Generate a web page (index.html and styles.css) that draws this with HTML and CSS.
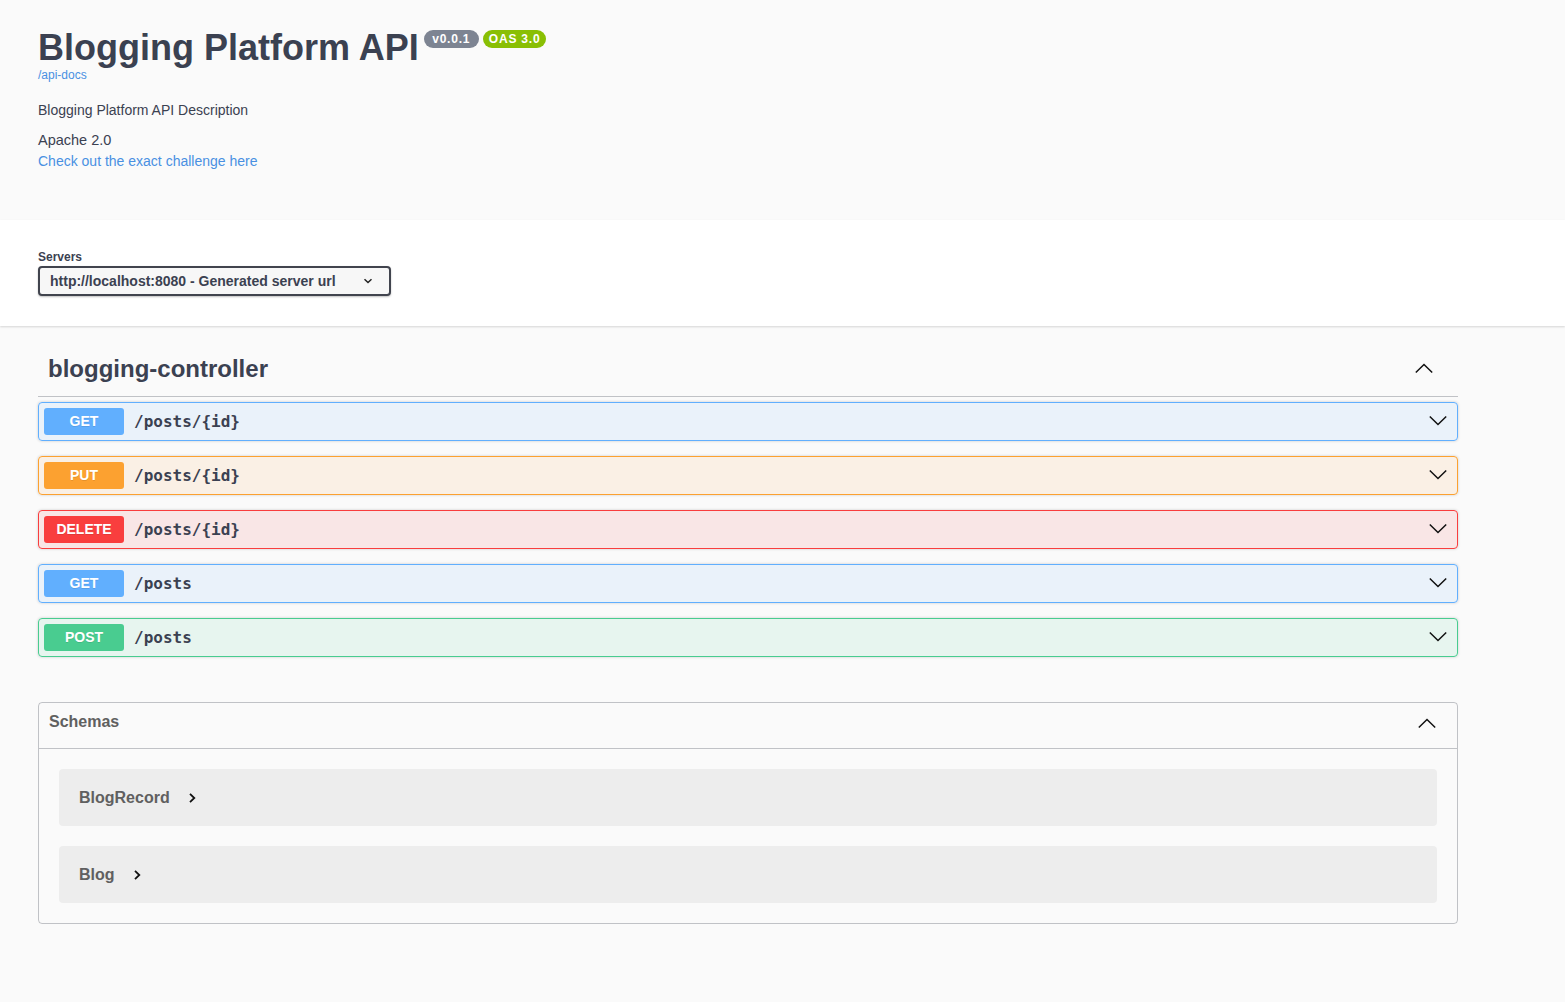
FILE: index.html
```html
<!DOCTYPE html>
<html lang="en">
<head>
<meta charset="utf-8">
<title>Blogging Platform API</title>
<link rel="stylesheet" href="styles.css">
</head>
<body>
<div class="info-section">
  <div class="wrapper">
    <h1 class="title"><span>Blogging Platform API</span><span class="badge version">v0.0.1</span><span class="badge oas">OAS 3.0</span></h1>
    <a class="base-url" href="#">/api-docs</a>
    <p class="description">Blogging Platform API Description</p>
    <div class="license">Apache 2.0</div>
    <a class="ext-link" href="#">Check out the exact challenge here</a>
  </div>
</div>

<div class="scheme-container">
  <div class="wrapper">
    <span class="servers-label">Servers</span>
    <div class="select">
      <span>http://localhost:8080 - Generated server url</span>
      <svg class="select-arrow" width="10" height="6" viewBox="0 0 10 6"><polyline points="1.5,1.2 5,4.5 8.5,1.2" fill="none" stroke="#222" stroke-width="1.5"/></svg>
    </div>
  </div>
</div>

<div class="wrapper">
  <section class="tag-section">
    <h3 class="tag">
      <span>blogging-controller</span>
      <svg class="tag-arrow" width="20" height="20" viewBox="0 0 20 20"><polyline points="1.8,13.5 10,5.5 18.2,13.5" fill="none" stroke="#111" stroke-width="1.5"/></svg>
    </h3>

    <div class="opblock get">
      <span class="method">GET</span>
      <span class="path">/posts/{id}</span>
      <svg class="op-arrow" width="20" height="20" viewBox="0 0 20 20"><polyline points="1.8,4.5 10,12.5 18.2,4.5" fill="none" stroke="#111" stroke-width="1.5"/></svg>
    </div>
    <div class="opblock put">
      <span class="method">PUT</span>
      <span class="path">/posts/{id}</span>
      <svg class="op-arrow" width="20" height="20" viewBox="0 0 20 20"><polyline points="1.8,4.5 10,12.5 18.2,4.5" fill="none" stroke="#111" stroke-width="1.5"/></svg>
    </div>
    <div class="opblock delete">
      <span class="method">DELETE</span>
      <span class="path">/posts/{id}</span>
      <svg class="op-arrow" width="20" height="20" viewBox="0 0 20 20"><polyline points="1.8,4.5 10,12.5 18.2,4.5" fill="none" stroke="#111" stroke-width="1.5"/></svg>
    </div>
    <div class="opblock get">
      <span class="method">GET</span>
      <span class="path">/posts</span>
      <svg class="op-arrow" width="20" height="20" viewBox="0 0 20 20"><polyline points="1.8,4.5 10,12.5 18.2,4.5" fill="none" stroke="#111" stroke-width="1.5"/></svg>
    </div>
    <div class="opblock post">
      <span class="method">POST</span>
      <span class="path">/posts</span>
      <svg class="op-arrow" width="20" height="20" viewBox="0 0 20 20"><polyline points="1.8,4.5 10,12.5 18.2,4.5" fill="none" stroke="#111" stroke-width="1.5"/></svg>
    </div>
  </section>

  <section class="models">
    <h4 class="models-head">
      <span>Schemas</span>
      <svg class="models-arrow" width="20" height="20" viewBox="0 0 20 20"><polyline points="1.8,15.5 10,7.5 18.2,15.5" fill="none" stroke="#111" stroke-width="1.5"/></svg>
    </h4>
    <div class="model">
      <span>BlogRecord</span>
      <svg class="model-arrow" width="10" height="12" viewBox="0 0 10 12"><polyline points="2,1.8 6.3,6 2,10.2" fill="none" stroke="#111" stroke-width="1.8"/></svg>
    </div>
    <div class="model">
      <span>Blog</span>
      <svg class="model-arrow" width="10" height="12" viewBox="0 0 10 12"><polyline points="2,1.8 6.3,6 2,10.2" fill="none" stroke="#111" stroke-width="1.8"/></svg>
    </div>
  </section>
</div>
</body>
</html>
```

FILE: styles.css
```css
html, body {
  margin: 0;
  background: #fafafa;
}

body {
  font-family: "Liberation Sans", Arial, sans-serif;
  color: #3b4151;
}

.wrapper {
  max-width: 1420px;
  padding: 0 38px;
}

/* Info header */
.info-section {
  height: 220px;
  box-sizing: border-box;
  padding-top: 26px;
}

.title {
  margin: 0;
  display: flex;
  align-items: flex-start;
  font-size: 36px;
  font-weight: 700;
  line-height: 43px;
  color: #3b4151;
}

.badge {
  margin: 4px 0 0 5px;
  height: 18px;
  line-height: 18px;
  font-size: 12px;
  padding: 0 8.5px;
  border-radius: 57px;
  color: #fff;
  letter-spacing: 0.8px;
}

.badge.version { background: #7d8492; }
.badge.oas { background: #89bf04; padding: 0 6px; margin-left: 4px; }

.base-url {
  display: block;
  margin-top: -1px;
  font-size: 12px;
  line-height: 14px;
  color: #4990e2;
  text-decoration: none;
}

.description {
  margin: 18px 0 0;
  font-size: 14px;
  line-height: 20px;
}

.license {
  margin-top: 10px;
  font-size: 14.5px;
  line-height: 21px;
}

.ext-link {
  display: block;
  font-size: 14px;
  line-height: 21px;
  color: #4990e2;
  text-decoration: none;
}

/* Servers */
.scheme-container {
  background: #fff;
  box-shadow: 0 1px 2px 0 rgba(0, 0, 0, 0.15);
  padding: 30px 0;
  margin-bottom: 20px;
}

.servers-label {
  display: block;
  font-size: 12px;
  font-weight: 700;
  line-height: 14px;
  margin-bottom: 2px;
}

.select {
  width: 353px;
  height: 30px;
  box-sizing: border-box;
  border: 2px solid #41444e;
  border-radius: 4px;
  background: #f7f7f7;
  box-shadow: 0 1px 2px 0 rgba(0, 0, 0, 0.25);
  display: flex;
  align-items: center;
  justify-content: space-between;
  padding: 0 16px 0 10px;
  font-size: 14px;
  font-weight: 700;
  color: #3b4151;
}

/* Tag section */
.tag-section {
  display: flow-root;
}

.tag {
  margin: 0 0 5px;
  display: flex;
  align-items: center;
  justify-content: space-between;
  padding: 8px 20px 12px 10px;
  font-size: 24px;
  line-height: 30px;
  font-weight: 700;
  border-bottom: 1px solid rgba(59, 65, 81, 0.3);
}

.tag-arrow { margin-right: 4px; }

.opblock {
  display: flex;
  align-items: center;
  height: 39px;
  box-sizing: border-box;
  padding: 0 5px;
  border: 1px solid;
  border-radius: 4px;
  box-shadow: 0 0 3px rgba(0, 0, 0, 0.19);
  margin-bottom: 15px;
}

.method {
  width: 80px;
  height: 27px;
  line-height: 27px;
  text-align: center;
  border-radius: 3px;
  color: #fff;
  font-size: 14px;
  font-weight: 700;
  text-shadow: 0 1px 0 rgba(0, 0, 0, 0.1);
}

.path {
  flex: 1;
  padding: 0 10px;
  font-family: "DejaVu Sans Mono", "Liberation Mono", monospace;
  font-size: 16px;
  font-weight: 700;
  color: #3b4151;
}

.op-arrow { margin-right: 4px; }

.opblock.get { background: rgba(97, 175, 254, 0.1); border-color: #61affe; }
.opblock.get .method { background: #61affe; }
.opblock.put { background: rgba(252, 161, 48, 0.1); border-color: #fca130; }
.opblock.put .method { background: #fca130; }
.opblock.delete { background: rgba(249, 62, 62, 0.1); border-color: #f93e3e; }
.opblock.delete .method { background: #f93e3e; }
.opblock.post { background: rgba(73, 204, 144, 0.1); border-color: #49cc90; }
.opblock.post .method { background: #49cc90; }

/* Schemas */
.models {
  margin: 30px 0 0;
  border: 1px solid rgba(59, 65, 81, 0.3);
  border-radius: 4px;
}

.models-head {
  margin: 0;
  display: flex;
  align-items: center;
  justify-content: space-between;
  padding: 6px 20px 14px 10px;
  line-height: 25px;
  font-size: 16px;
  font-weight: 700;
  color: #606060;
  border-bottom: 1px solid rgba(59, 65, 81, 0.3);
}

.model {
  margin: 20px;
  height: 57px;
  box-sizing: border-box;
  background: rgba(0, 0, 0, 0.05);
  border-radius: 4px;
  display: flex;
  align-items: center;
  padding: 0 20px;
  font-size: 16px;
  font-weight: 700;
  color: #606060;
}

.model-arrow { margin-left: 18px; }
```
